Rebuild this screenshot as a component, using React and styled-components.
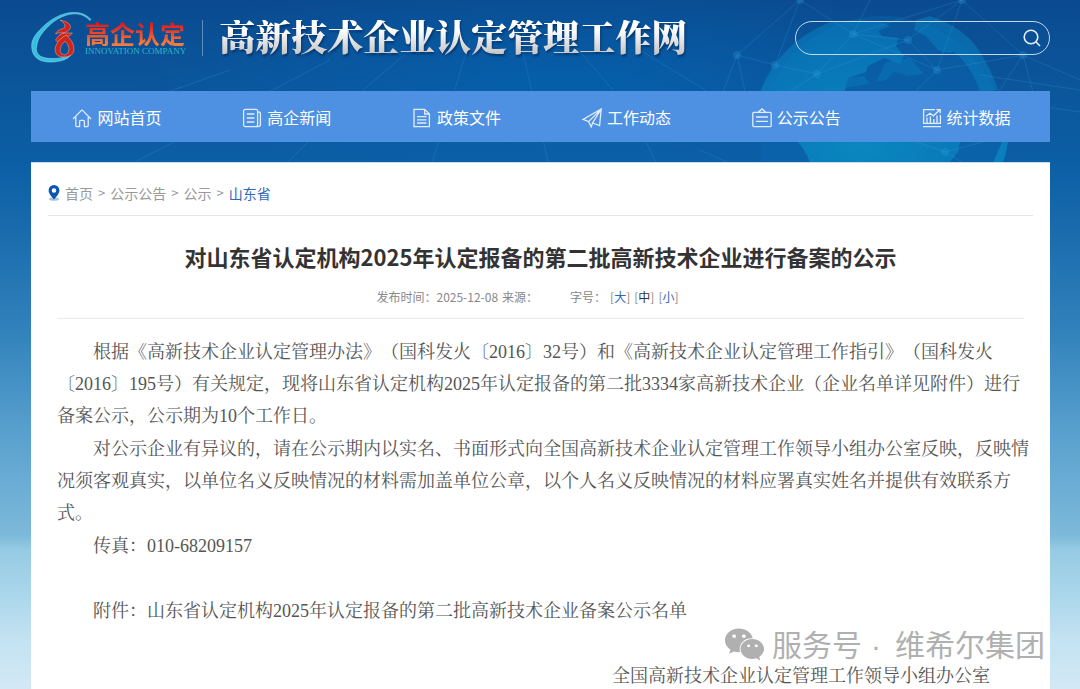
import { useState } from 'react';
import styled, { createGlobalStyle } from 'styled-components';
import { FaWeixin } from 'react-icons/fa';

const SANS = '"Noto Sans CJK SC", sans-serif';
const SERIF = '"Liberation Serif", "Noto Serif CJK SC", "Noto Sans CJK SC", serif';

const GlobalStyle = createGlobalStyle`
  * {
    box-sizing: border-box;
  }

  html {
    scrollbar-width: none;
  }

  body {
    margin: 0;
    font-family: ${SANS};
    text-spacing-trim: space-all;
  }
`;

const Page = styled.div`
  position: relative;
  min-height: 100vh;
  padding: 0 30px 0 31px;
  background: linear-gradient(
    180deg,
    #0a4b90 0,
    #0b5298 60px,
    #0c5fa5 165px,
    #1b6dae 240px,
    #3182bb 330px,
    #5ba2cf 440px,
    #7db9da 535px,
    #96cbe3 550px,
    #a8d5ea 590px,
    #c3e2f2 640px,
    #d3e9f5 690px
  );
`;

const Backdrop = styled.svg`
  position: absolute;
  top: 0;
  right: 0;
  width: 100%;
  height: 170px;
`;

const Content = styled.div`
  position: relative;
`;

const Header = styled.header`
  display: flex;
  align-items: center;
  height: 91px;
  padding-bottom: 16px;
`;

const LogoLink = styled.a`
  display: flex;
  align-items: center;
  gap: 4px;
  padding-right: 16px;
  text-decoration: none;

  svg {
    overflow: visible;
  }
`;

const LogoText = styled.span`
  display: flex;
  flex-direction: column;
`;

const LogoName = styled.span`
  font-size: 25px;
  line-height: 26px;
  font-weight: 700;
  color: transparent;
  background: linear-gradient(180deg, #e01c1c 15%, #f47a3c 90%);
  background-clip: text;
`;

const LogoSub = styled.span`
  font-family: "Liberation Serif", serif;
  font-size: 9px;
  line-height: 10px;
  color: #2fb6c8;
`;

const SiteTitle = styled.h1`
  margin: 0;
  padding-left: 16px;
  border-left: 1px solid #5b8dbd;
  font-family: "Noto Serif CJK SC", ${SANS};
  font-size: 36px;
  line-height: 36px;
  font-weight: 900;
  white-space: nowrap;

  span {
    display: block;
    padding-bottom: 4px;
    line-height: 32px;
    color: transparent;
    background: linear-gradient(180deg, #ffffff 25%, #c6c6c6 95%);
    background-clip: text;
    filter: drop-shadow(1px 2px 1px rgba(0, 20, 60, 0.5));
  }
`;

const Search = styled.form`
  display: flex;
  align-items: center;
  width: 255px;
  height: 34px;
  margin-left: auto;
  padding: 0 8px 0 16px;
  border: 1px solid #c3d8ea;
  border-radius: 17px;
`;

const SearchInput = styled.input`
  flex: 1;
  min-width: 0;
  border: 0;
  outline: 0;
  background: transparent;
  color: white;
  font-family: ${SANS};
  font-size: 14px;
`;

const SearchButton = styled.button`
  display: flex;
  padding: 0;
  border: 0;
  background: transparent;
  color: #e6eff7;
  cursor: pointer;
`;

const Nav = styled.nav`
  display: grid;
  grid-template-columns: repeat(6, 1fr);
  height: 51px;
  background-color: #4e90e2;
`;

const NavLink = styled.a`
  display: flex;
  align-items: center;
  justify-content: center;
  gap: 5px;
  padding-left: 2px;
  color: white;
  font-size: 16px;
  line-height: 24px;
  text-decoration: none;
`;

const NavIcon = styled.svg`
  width: 20px;
  height: 20px;
  margin-top: 2px;
  fill: none;
  stroke: #e3edfa;
  stroke-width: 1.3;
`;

const Panel = styled.main`
  margin-top: 20px;
  padding: 0 17px;
  background-color: white;
  border-top: 1px solid #c9dcec;
`;

const Breadcrumb = styled.nav`
  display: flex;
  align-items: center;
  gap: 5px;
  height: 53px;
  padding-top: 7px;
  border-bottom: 1px solid #e4e4e4;
  color: #999;
  font-size: 14px;
  line-height: 20px;
`;

const Crumb = styled.a`
  color: ${({ $active }) => ($active ? '#2d68b8' : '#999')};
  text-decoration: none;
`;

const Arrow = styled.span`
  font-size: 13px;
`;

const Title = styled.h2`
  margin: 0;
  padding-top: 24px;
  color: #333;
  font-size: 22px;
  line-height: 32px;
  font-weight: 700;
  text-align: center;
`;

const Meta = styled.div`
  display: flex;
  align-items: flex-start;
  justify-content: center;
  gap: 4px;
  height: 47px;
  margin: 0 9px;
  padding: 16px 26px 0 0;
  border-bottom: 1px solid #ebebeb;
  color: #888;
  font-size: 12px;
  line-height: 18px;
`;

const SizeLabel = styled.span`
  margin-left: 28px;
`;

const SizeButton = styled.button`
  padding: 0;
  border: 0;
  background: transparent;
  color: #888;
  font: inherit;
  cursor: pointer;

  span {
    color: ${({ $active }) => ($active ? '#333' : '#2d68b8')};
  }
`;

const Article = styled.article`
  display: flex;
  flex-direction: column;
  gap: 1px;
  padding: 17px 0 0 9px;
  color: #555;
  font-family: ${SERIF};
  font-size: ${({ $size }) => $size}px;
  line-height: 32px;
`;

const Paragraph = styled.p`
  margin: ${({ $spaced }) => ($spaced ? '32px' : '0')} 0 0;
  text-indent: 2em;
`;

const Signature = styled.p`
  margin: 32px 43px 0 0;
  text-align: right;
`;

const Watermark = styled.div`
  position: absolute;
  top: 621px;
  right: 35px;
  display: flex;
  align-items: center;
  gap: 7px;
  color: #b0b0b0;
  font-size: 30px;
  line-height: 44px;
  white-space: nowrap;
`;

const Dot = styled.span`
  padding: 0 14px 0 9px;
  font-family: "Liberation Sans", sans-serif;
`;

const ICONS = {
  home: (
    <path d="M1 11 9.2 2.6Q10 1.9 10.8 2.6L19 11M3.8 9v8.4q0 1.2 1.2 1.2h2.6v-5.2q0-1 1-1h2.8q1 0 1 1v5.2H15q1.2 0 1.2-1.2V9" />
  ),
  news: (
    <>
      <rect x="1.6" y="1.4" width="14" height="17.2" rx="1.6" />
      <path d="M15.6 4h1.2q1.6 0 1.6 1.6v11q0 2-2 2H14M4.8 6h7.6M4.8 10h7.6M4.8 14h7.6" />
    </>
  ),
  file: (
    <path d="M2 1.4h10.6L17.4 6v12.6H2zM12.6 1.4V6h4.8M5 8.6h9.4M5 11.8h9.4M5 15h9.4" />
  ),
  plane: (
    <path d="M19.2 1 1 11.4l5.6 2.2L19.2 1l-1.6 16.6-7-2.6zM6.6 13.6l2.6 5.2 1.4-3.8L19.2 1" />
  ),
  notice: (
    <path d="M2 4.4h16q1.2 0 1.2 1.2v11.8q0 1.2-1.2 1.2H2q-1.2 0-1.2-1.2V5.6q0-1.2 1.2-1.2zM6.2 4.2 10 .9l3.8 3.3M4 9h12M4 13.4h12" />
  ),
  chart: (
    <path d="M13 1.6H1.6v13.8h16.8V7M1 18.6h18M5 15V9.6M8.4 15V8.4M11.8 15v-4M15 15V7.6M4 8.2l4-3 3.4 2.6L17.6 2M14.4 1.6h3.8v3.6" />
  ),
};

const NAV_ITEMS = [
  { icon: 'home', label: '网站首页' },
  { icon: 'news', label: '高企新闻' },
  { icon: 'file', label: '政策文件' },
  { icon: 'plane', label: '工作动态' },
  { icon: 'notice', label: '公示公告' },
  { icon: 'chart', label: '统计数据' },
];

const SIZES = [
  { label: '大', value: 20 },
  { label: '中', value: 18 },
  { label: '小', value: 16 },
];

const NODES = [[737, 55], [800, 0], [853, 34], [817, 74], [775, 65], [937, 70], [1023, 55], [962, 0], [908, 40], [945, 152]];

const Scene = () => (
  <Backdrop viewBox="0 0 1080 170" preserveAspectRatio="xMaxYMin slice" aria-hidden="true">
    <defs>
      <radialGradient id="globe" cx="50%" cy="80%" r="75%">
        <stop offset="0" stopColor="#0a98c8" stopOpacity="0.7" />
        <stop offset="1" stopColor="#0884c4" stopOpacity="0.5" />
      </radialGradient>
      <radialGradient id="glow" cx="50%" cy="50%" r="50%">
        <stop offset="0" stopColor="#0068b8" stopOpacity="0.5" />
        <stop offset="1" stopColor="#0068b8" stopOpacity="0" />
      </radialGradient>
    </defs>
    <ellipse cx="560" cy="80" rx="420" ry="100" fill="url(#glow)" />
    <circle cx="882" cy="138" r="122" fill="#0a6cb4" opacity="0.35" />
    <path
      d="M760 92Q778 44 830 22q26-3 52 0l8 4-12 5 4 5 16 2-2 8 8 10-4 8-16-6-16 8-2 6-18 6-4 16-22-2v12l24 6 40-12q24-6 40 2l22 12 14 20-4 20-16 20H812q-2-16-14-30-20-16-38-50z"
      fill="url(#globe)"
    />
    <path d="M916 20l14-4q30 10 46 30 14 20 22 44l-18 2q-8-26-26-40-10 2-16-2l-12-14-12-6z" fill="#0a80c0" opacity="0.55" />
    <path d="M1002 142h6q-2 14-8 28h-10z" fill="#0a8cc6" opacity="0.7" />
    <path d="M886 62l24-4 14 16-16 2-14-4-8 8-10 2zM844 78l20-2 6 8-26 4z" fill="#0a78ba" opacity="0.5" />
    <g stroke="#3fa8e0" strokeOpacity="0.22" fill="none">
      <path d="M800 0 737 55 720 100M737 55l10 45M800 0l53 34 84 36 86-15L962 0 853 34 817 74l-42-9L800 0M962 0l-54 40-91 34M853 34l55 6 29 30 25-70M1023 55l-30 45M1023 55l12 45M937 70l-30 30M1023 55l57 25M870 0l-17 34M775 65l-38-10M817 74l-40 26M700 150l45 20M945 152l-50-18M945 152l60-16M945 152l30 18" />
      <path d="M410 50l-70 60-60 60M470 40l-40 130M520 40l30 130M570 40l60 70 30 60M640 50l130 80M330 60 120 170M230 70 60 130M980 75l100 15M1000 100l80 12" />
    </g>
    <g fill="#2f9be0" fillOpacity="0.28">
      {NODES.map(([x, y]) => (
        <circle key={`${x}-${y}`} cx={x} cy={y} r="4" />
      ))}
    </g>
  </Backdrop>
);

const LogoMark = () => (
  <svg width="50" height="52" viewBox="0 0 50 52" aria-hidden="true">
    <path
      d="M60 7.500C54 1 47 0 39 .7 30 2 22 6 15 12 6 20 1 26 .7 33 .5 41 4 50 19 50c9 0 17-2 21-7-7 3-15 4-21 3.500C8 46 4 41 5.700 34 7 27 9 24 13 19 19 12 25 7 33 4c8-3 18-4 26 4.500z"
      fill="#35bfe0"
      stroke="#9fe5f2"
      strokeWidth="0.5"
    />
    <g fill="#d3241c" stroke="#f5a890" strokeWidth="0.5">
      <path d="M29 8q11 2 10.500 7.500-1 4-7.500 5.500h9.500l-3 3q-6-1-12 6l-2-2q3-6 8-7-5-1-8 1 1-4 9-6 2-4-4.500-8z" />
      <path
        fillRule="evenodd"
        d="M35 23q8 6 8 15-1 7-10 7-9 0-9-8 1-8 11-14zm-1 6q-5 4-5 10 1 4 5 4 4-1 4-6 0-4-4-8z"
      />
    </g>
  </svg>
);

const App = () => {
  const [size, setSize] = useState(18);
  const [keyword, setKeyword] = useState('');

  return (
    <Page>
      <GlobalStyle />
      <Scene />
      <Content>
        <Header>
          <LogoLink href="#">
            <LogoMark />
            <LogoText>
              <LogoName>高企认定</LogoName>
              <LogoSub>INNOVATION COMPANY</LogoSub>
            </LogoText>
          </LogoLink>
          <SiteTitle>
            <span>高新技术企业认定管理工作网</span>
          </SiteTitle>
          <Search role="search" onSubmit={e => e.preventDefault()}>
            <SearchInput
              type="text"
              aria-label="搜索"
              value={keyword}
              onChange={e => setKeyword(e.target.value)}
            />
            <SearchButton type="submit" aria-label="搜索">
              <svg width="18" height="18" viewBox="0 0 18 18" fill="none" stroke="currentColor" strokeWidth="1.6">
                <circle cx="8" cy="8" r="6.8" />
                <path d="M12.8 12.8 17 17" />
              </svg>
            </SearchButton>
          </Search>
        </Header>

        <Nav aria-label="主导航">
          {NAV_ITEMS.map(item => (
            <NavLink key={item.icon} href="#">
              <NavIcon viewBox="0 0 20 20" aria-hidden="true">{ICONS[item.icon]}</NavIcon>
              {item.label}
            </NavLink>
          ))}
        </Nav>

        <Panel>
          <Breadcrumb aria-label="当前位置">
            <svg width="12" height="16" viewBox="0 0 12 16" aria-hidden="true">
              <ellipse cx="6" cy="14" rx="5" ry="1.8" fill="#a9c5e6" />
              <path d="M6 0a5.4 5.4 0 0 0-5.4 5.4C.6 9 6 14.4 6 14.4S11.4 9 11.4 5.4A5.4 5.4 0 0 0 6 0zm0 3.2a2.3 2.3 0 1 1 0 4.6 2.3 2.3 0 0 1 0-4.6z" fill="#0b57ae" />
            </svg>
            <Crumb href="#">首页</Crumb>
            <Arrow>&gt;</Arrow>
            <Crumb href="#">公示公告</Crumb>
            <Arrow>&gt;</Arrow>
            <Crumb href="#">公示</Crumb>
            <Arrow>&gt;</Arrow>
            <Crumb href="#" $active>山东省</Crumb>
          </Breadcrumb>

          <Title>对山东省认定机构2025年认定报备的第二批高新技术企业进行备案的公示</Title>
          <Meta>
            <span>发布时间：2025-12-08</span>
            <span>来源：</span>
            <SizeLabel>字号：</SizeLabel>
            {SIZES.map(s => (
              <SizeButton
                key={s.value}
                type="button"
                $active={s.value === size}
                onClick={() => setSize(s.value)}
              >
                [<span>{s.label}</span>]
              </SizeButton>
            ))}
          </Meta>

          <Article $size={size}>
            <Paragraph>
              根据《高新技术企业认定管理办法》（国科发火〔2016〕32号）和《高新技术企业认定管理工作指引》（国科发火〔2016〕195号）有关规定，现将山东省认定机构2025年认定报备的第二批3334家高新技术企业（企业名单详见附件）进行备案公示，公示期为10个工作日。
            </Paragraph>
            <Paragraph>
              对公示企业有异议的，请在公示期内以实名、书面形式向全国高新技术企业认定管理工作领导小组办公室反映，反映情况须客观真实，以单位名义反映情况的材料需加盖单位公章，以个人名义反映情况的材料应署真实姓名并提供有效联系方式。
            </Paragraph>
            <Paragraph>传真：010-68209157</Paragraph>
            <Paragraph $spaced>附件：山东省认定机构2025年认定报备的第二批高新技术企业备案公示名单</Paragraph>
            <Signature>全国高新技术企业认定管理工作领导小组办公室</Signature>
          </Article>
        </Panel>
      </Content>
      <Watermark>
        <FaWeixin size={41} />
        <span>服务号<Dot>·</Dot>维希尔集团</span>
      </Watermark>
    </Page>
  );
};

export default App;
